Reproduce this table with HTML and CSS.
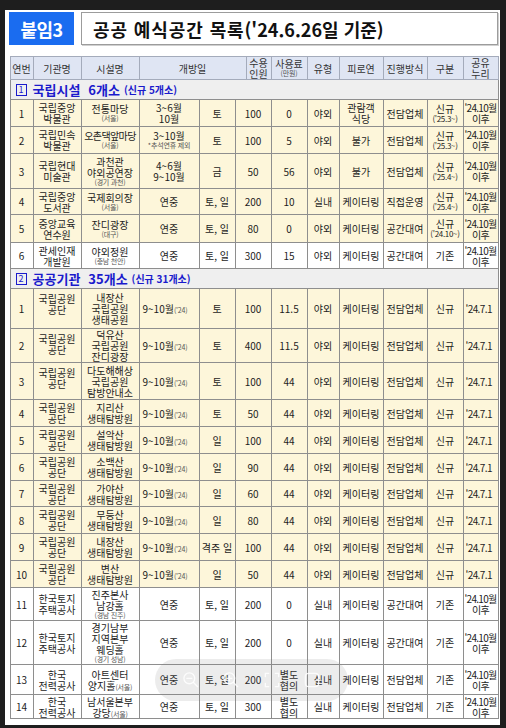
FILE: index.html
```html
<!DOCTYPE html>
<html lang="ko">
<head>
<meta charset="utf-8">
<link rel="stylesheet" href="styles.css">
</head>
<body>
<div class="page">
  <div class="titlebar">
    <div class="tag">붙임3</div>
    <div class="title">공공 예식공간 목록<span class="date">('24.6.26일 기준)</span></div>
  </div>

  <table class="grid head">
    <colgroup>
      <col class="w23"><col class="w48"><col class="w58"><col class="w107"><col class="w25"><col class="w36"><col class="w32"><col class="w44"><col class="w44"><col class="w36"><col class="w35">
    </colgroup>
    <tr class="h23">
      <th>연번</th><th>기관명</th><th>시설명</th><th>개방일</th><th>수용<br>인원</th><th>사용료<span class="sb">(만원)</span></th><th>유형</th><th>피로연</th><th>진행방식</th><th>구분</th><th>공유<br>누리</th>
    </tr>
  </table>

  <table class="grid body">
    <colgroup>
      <col class="w23"><col class="w48"><col class="w58"><col class="w60"><col class="w36"><col class="w36"><col class="w36"><col class="w32"><col class="w44"><col class="w44"><col class="w36"><col class="w35">
    </colgroup>
    <tr class="sec h20"><td colspan="12"><span class="num">1</span><span class="sname">국립시설</span><span class="scount">6개소</span><span class="snew">(신규 5개소)</span></td></tr>
    <tr class="new h27"><td>1</td><td>국립중앙<br>박물관</td><td>전통마당<span class="sb">(서울)</span></td><td>3~6월<br>10월</td><td>토</td><td>100</td><td>0</td><td>야외</td><td>관람객<br>식당</td><td>전담업체</td><td>신규<span class="sb2">('25.3~)</span></td><td class="nr">'24.10월<br>이후</td></tr>
    <tr class="new h27"><td>2</td><td>국립민속<br>박물관</td><td class="tight">오촌댁앞마당<span class="sb">(서울)</span></td><td>3~10월<span class="sb">*추석연휴 제외</span></td><td>토</td><td>100</td><td>5</td><td>야외</td><td>불가</td><td>전담업체</td><td>신규<span class="sb2">('25.3~)</span></td><td class="nr">'24.10월<br>이후</td></tr>
    <tr class="new h35"><td>3</td><td>국립현대<br>미술관</td><td>과천관<br>야외공연장<span class="sb">(경기 과천)</span></td><td>4~6월<br>9~10월</td><td>금</td><td>50</td><td>56</td><td>야외</td><td>불가</td><td>전담업체</td><td>신규<span class="sb2">('25.4~)</span></td><td class="nr">'24.10월<br>이후</td></tr>
    <tr class="new h26"><td>4</td><td>국립중앙<br>도서관</td><td>국제회의장<span class="sb">(서울)</span></td><td>연중</td><td>토, 일</td><td>200</td><td>10</td><td>실내</td><td>케이터링</td><td>직접운영</td><td>신규<span class="sb2">('25.4~)</span></td><td class="nr">'24.10월<br>이후</td></tr>
    <tr class="new h28"><td>5</td><td>중앙교육<br>연수원</td><td>잔디광장<span class="sb">(대구)</span></td><td>연중</td><td>토, 일</td><td>80</td><td>0</td><td>야외</td><td>케이터링</td><td>공간대여</td><td>신규<span class="sb2">('24.10~)</span></td><td class="nr">'24.10월<br>이후</td></tr>
    <tr class="h26"><td>6</td><td>관세인재<br>개발원</td><td>야외정원<span class="sb">(충남 천안)</span></td><td>연중</td><td>토, 일</td><td>300</td><td>15</td><td>야외</td><td>케이터링</td><td>공간대여</td><td>기존</td><td class="nr">'24.10월<br>이후</td></tr>

    <tr class="sec h20"><td colspan="12"><span class="num">2</span><span class="sname">공공기관</span><span class="scount">35개소</span><span class="snew">(신규 31개소)</span></td></tr>
    <tr class="new h40"><td>1</td><td class="up">국립공원<br>공단</td><td>내장산<br>국립공원<br>생태공원</td><td class="left">9~10월<span class="s">('24)</span></td><td>토</td><td>100</td><td>11.5</td><td>야외</td><td>케이터링</td><td>전담업체</td><td>신규</td><td class="date2">'24.7.1</td></tr>
    <tr class="new h34"><td>2</td><td class="up">국립공원<br>공단</td><td>덕유산<br>국립공원<br>잔디광장</td><td class="left">9~10월<span class="s">('24)</span></td><td>토</td><td>400</td><td>11.5</td><td>야외</td><td>케이터링</td><td>전담업체</td><td>신규</td><td class="date2">'24.7.1</td></tr>
    <tr class="new h37"><td>3</td><td class="up">국립공원<br>공단</td><td>다도해해상<br>국립공원<br>탐방안내소</td><td class="left">9~10월<span class="s">('24)</span></td><td>토</td><td>100</td><td>44</td><td>야외</td><td>케이터링</td><td>전담업체</td><td>신규</td><td class="date2">'24.7.1</td></tr>
    <tr class="new h27"><td>4</td><td>국립공원<br>공단</td><td>지리산<br>생태탐방원</td><td class="left">9~10월<span class="s">('24)</span></td><td>토</td><td>50</td><td>44</td><td>야외</td><td>케이터링</td><td>전담업체</td><td>신규</td><td class="date2">'24.7.1</td></tr>
    <tr class="new h27"><td>5</td><td>국립공원<br>공단</td><td>설악산<br>생태탐방원</td><td class="left">9~10월<span class="s">('24)</span></td><td>일</td><td>100</td><td>44</td><td>야외</td><td>케이터링</td><td>전담업체</td><td>신규</td><td class="date2">'24.7.1</td></tr>
    <tr class="new h27"><td>6</td><td>국립공원<br>공단</td><td>소백산<br>생태탐방원</td><td class="left">9~10월<span class="s">('24)</span></td><td>일</td><td>90</td><td>44</td><td>야외</td><td>케이터링</td><td>전담업체</td><td>신규</td><td class="date2">'24.7.1</td></tr>
    <tr class="new h26"><td>7</td><td>국립공원<br>공단</td><td>가야산<br>생태탐방원</td><td class="left">9~10월<span class="s">('24)</span></td><td>일</td><td>60</td><td>44</td><td>야외</td><td>케이터링</td><td>전담업체</td><td>신규</td><td class="date2">'24.7.1</td></tr>
    <tr class="new h27"><td>8</td><td>국립공원<br>공단</td><td>무등산<br>생태탐방원</td><td class="left">9~10월<span class="s">('24)</span></td><td>일</td><td>80</td><td>44</td><td>야외</td><td>케이터링</td><td>전담업체</td><td>신규</td><td class="date2">'24.7.1</td></tr>
    <tr class="new h27"><td>9</td><td>국립공원<br>공단</td><td>내장산<br>생태탐방원</td><td class="left">9~10월<span class="s">('24)</span></td><td>격주 일</td><td>100</td><td>44</td><td>야외</td><td>케이터링</td><td>전담업체</td><td>신규</td><td class="date2">'24.7.1</td></tr>
    <tr class="new h27"><td>10</td><td>국립공원<br>공단</td><td>변산<br>생태탐방원</td><td class="left">9~10월<span class="s">('24)</span></td><td>일</td><td>50</td><td>44</td><td>야외</td><td>케이터링</td><td>전담업체</td><td>신규</td><td class="date2">'24.7.1</td></tr>
    <tr class="h33"><td>11</td><td>한국토지<br>주택공사</td><td>진주본사<br>남강홀<span class="sb">(경남 진주)</span></td><td>연중</td><td>토, 일</td><td>200</td><td>0</td><td>실내</td><td>케이터링</td><td>공간대여</td><td>기존</td><td class="nr">'24.10월<br>이후</td></tr>
    <tr class="h44"><td>12</td><td>한국토지<br>주택공사</td><td>경기남부<br>지역본부<br>웨딩홀<span class="sb">(경기 성남)</span></td><td>연중</td><td>토, 일</td><td>200</td><td>0</td><td>실내</td><td>케이터링</td><td>공간대여</td><td>기존</td><td class="nr">'24.10월<br>이후</td></tr>
    <tr class="h30"><td>13</td><td>한국<br>전력공사</td><td>아트센터<br>양지홀<span class="s">(서울)</span></td><td>연중</td><td>토, 일</td><td>200</td><td>별도<br>협의</td><td>실내</td><td>케이터링</td><td>전담업체</td><td>기존</td><td class="nr">'24.10월<br>이후</td></tr>
    <tr class="h24"><td>14</td><td>한국<br>전력공사</td><td>남서울본부<br>강당<span class="s">(서울)</span></td><td>연중</td><td>토, 일</td><td>300</td><td>별도<br>협의</td><td>실내</td><td>케이터링</td><td>전담업체</td><td>기존</td><td class="nr">'24.10월<br>이후</td></tr>
  </table>
</div>

<div class="viewer-bar">
  <svg class="vb-icon" viewBox="0 0 24 24"><circle cx="10" cy="10" r="6.5"/><path d="M15 15l5 5M7 10h6"/></svg>
  <svg class="vb-icon" viewBox="0 0 24 24"><circle cx="10" cy="10" r="6.5"/><path d="M15 15l5 5M7 10h6M10 7v6"/></svg>
  <svg class="vb-icon" viewBox="0 0 24 24"><path d="M8 4H4v4M16 4h4v4M8 20H4v-4M16 20h4v-4"/></svg>
  <svg class="vb-icon" viewBox="0 0 24 24"><rect x="4" y="4" width="16" height="16" rx="4"/></svg>
</div>
</body>
</html>
```

FILE: styles.css
```css
html, body {
  margin: 0;
  padding: 0;
}
body {
  background: #1e1e1e;
  width: 506px;
  height: 728px;
  overflow: hidden;
  position: relative;
  font-family: "Noto Sans CJK KR", "Noto Sans", sans-serif;
  color: #1c1c1c;
}
.page {
  margin: 10px 6px 0 5px;
  height: 715px;
  background: #ffffff;
  padding: 2px 2px 0 4px;
  box-sizing: border-box;
}
.titlebar {
  display: flex;
  gap: 7px;
  height: 33px;
}
.tag {
  width: 65px;
  background: #1a6cf0;
  color: #ffffff;
  font-weight: 700;
  font-size: 18px;
  display: flex;
  align-items: center;
  justify-content: center;
  letter-spacing: -0.5px;
}
.title {
  flex: 1;
  border: 1px solid #9c9c9c;
  box-shadow: 1px 1px 0 #d0d0d0;
  display: flex;
  align-items: center;
  padding-left: 11px;
  font-weight: 700;
  font-size: 18px;
  letter-spacing: 0.9px;
  color: #111;
}
.title .date {
  letter-spacing: 0;
}
.grid {
  border-collapse: separate;
  border-spacing: 0;
  table-layout: fixed;
  width: 488px;
  margin-left: 0.5px;
  border-left: 1px solid #8e8e8e;
}
.grid.head {
  margin-top: 11px;
  border-top: 1px solid #a4abbb;
  border-left-color: #a4abbb;
}
.grid td, .grid th {
  border-right: 1px solid #8e8e8e;
  border-bottom: 1px solid #8e8e8e;
  padding: 0;
  text-align: center;
  vertical-align: middle;
  font-size: 10px;
  line-height: 11px;
  font-weight: 400;
  white-space: nowrap;
}
.grid th {
  background: #dfe5f3;
  color: #333;
  border-color: #a4abbb;
}
.w23 { width: 23px; }
.w25 { width: 25px; }
.w32 { width: 32px; }
.w35 { width: 35px; }
.w36 { width: 36px; }
.w44 { width: 44px; }
.w48 { width: 48px; }
.w58 { width: 58px; }
.w60 { width: 60px; }
.w107 { width: 107px; }

.s {
  font-size: 7px;
  line-height: 0;
  color: #555;
  letter-spacing: -0.2px;
}
.sb {
  display: block;
  font-size: 7px;
  line-height: 9px;
  color: #555;
  letter-spacing: -0.2px;
}
.sb2 {
  display: block;
  font-size: 8px;
  line-height: 10px;
  letter-spacing: -0.3px;
}
.nr {
  letter-spacing: -0.7px;
}
.grid td.date2 {
  text-align: left;
  padding-left: 2px;
  letter-spacing: -0.6px;
}
.tight {
  letter-spacing: -0.6px;
}
.grid td.left {
  text-align: left;
  padding-left: 3px;
}
.grid td.up {
  vertical-align: top;
  padding-top: 4px;
}

tr.new td {
  background: #fdf6da;
}
.grid tr.sec td {
  background: #efefef;
  text-align: left;
  padding-left: 5px;
  color: #1a1acc;
  font-weight: 700;
  line-height: 16px;
}
.num {
  display: inline-block;
  width: 9px;
  height: 10px;
  border: 1px solid #1a1acc;
  font-size: 9px;
  line-height: 10px;
  text-align: center;
  font-weight: 400;
  vertical-align: middle;
  margin-right: 6px;
}
.sname {
  font-size: 13px;
  vertical-align: middle;
  margin-right: 8px;
}
.scount {
  font-size: 13px;
  vertical-align: middle;
  margin-right: 4px;
}
.snew {
  font-size: 10px;
  vertical-align: middle;
}

.h20 { height: 20px; }
.h23 { height: 23px; }
.h24 { height: 24px; }
.h26 { height: 26px; }
.h27 { height: 27px; }
.h28 { height: 28px; }
.h30 { height: 30px; }
.h33 { height: 33px; }
.h34 { height: 34px; }
.h35 { height: 35px; }
.h37 { height: 37px; }
.h40 { height: 40px; }
.h44 { height: 44px; }

.viewer-bar {
  position: absolute;
  left: 155px;
  top: 659px;
  width: 193px;
  height: 42px;
  border-radius: 21px;
  background: rgba(120, 120, 120, 0.14);
  display: flex;
  align-items: center;
  justify-content: space-around;
  padding: 0 16px;
  box-sizing: border-box;
}
.vb-icon {
  width: 20px;
  height: 20px;
  fill: none;
  stroke: rgba(255, 255, 255, 0.85);
  stroke-width: 1.6;
  stroke-linecap: round;
}
```
